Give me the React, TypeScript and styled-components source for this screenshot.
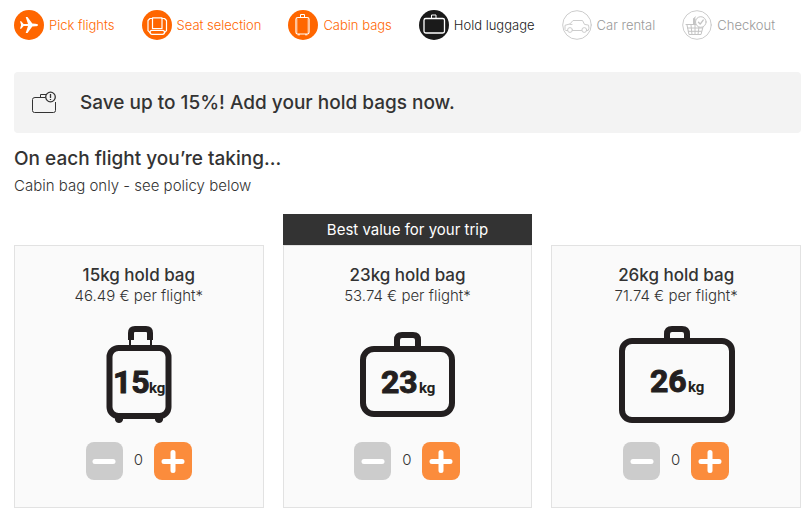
import React, { useState } from 'react';
import styled, { createGlobalStyle } from 'styled-components';

const GlobalStyle = createGlobalStyle`
  * { box-sizing: border-box; }
  body {
    margin: 0;
    background: #fff;
    color: #333;
    font-family: Inter, sans-serif;
    font-size: 15px;
  }
  h2, h3, p { margin: 0; }
`;

const Page = styled.div`
  padding: 10px 7px 9px 14px;
`;

const Steps = styled.nav`
  display: flex;
  gap: 27px;
  margin-bottom: 32px;
`;

type StepState = 'done' | 'current' | 'todo';
const stepColor = { done: '#ff6600', current: '#1a1a1a', todo: '#999' };

const Step = styled.a<{ $state: StepState }>`
  display: flex;
  align-items: center;
  gap: 5px;
  color: ${(p) => stepColor[p.$state]};
  font: 300 13px/30px Inter, sans-serif;
  white-space: nowrap;
  text-decoration: none;
`;

const StepIcon = styled.svg`
  flex: none;
  width: 30px;
  height: 30px;
  fill: none;
  stroke-linecap: round;
  stroke-linejoin: round;
`;

const Banner = styled.section`
  display: flex;
  align-items: center;
  gap: 23px;
  min-height: 61px;
  padding: 0 17px;
  margin-bottom: 12px;
  border-radius: 4px;
  background: #f3f3f3;
`;

const BannerIcon = styled.svg`
  width: 26px;
  height: 24px;
  fill: none;
  stroke: #333;
`;

const BannerText = styled.p`
  font: 500 19px/28px Inter, sans-serif;
`;

const Heading = styled.h2`
  font: 500 19px/28px Inter, sans-serif;
`;

const Note = styled.p`
  font: 300 15px/26px Inter, sans-serif;
`;

const Options = styled.div`
  display: grid;
  grid-template-columns: repeat(3, 1fr);
  gap: 19px;
  align-items: end;
  margin-top: 15px;
`;

const Option = styled.article`
  text-align: center;
`;

const Ribbon = styled.div`
  background: #333;
  color: #fff;
  font: 400 15px/31px Inter, sans-serif;
`;

const Card = styled.div`
  display: flex;
  flex-direction: column;
  align-items: center;
  padding: 18px 8px 27px;
  border: 1px solid #e2e2e2;
  background: #fafafa;
`;

const BagName = styled.h3`
  font: 500 17px/22px Inter, sans-serif;
`;

const Price = styled.p`
  font: 300 15px/20px Inter, sans-serif;
`;

const BagDrawing = styled.svg`
  width: 120px;
  height: 120px;
  margin-top: 9px;
  fill: none;
  stroke: #231f20;

  text {
    fill: #231f20;
    stroke-width: 1;
    stroke-linejoin: round;
    font: 700 32px Roboto, sans-serif;
  }
  text.unit {
    stroke-width: 0;
    font-size: 15px;
  }
`;

const Stepper = styled.div`
  display: flex;
  align-items: center;
  margin-top: 7px;
`;

const Count = styled.output`
  width: 31px;
  padding-bottom: 2px;
  font: 300 15px/34px Inter, sans-serif;
`;

const RoundButton = styled.button<{ $add?: boolean }>`
  display: grid;
  place-items: center;
  width: ${(p) => (p.$add ? 38 : 37)}px;
  height: 38px;
  padding: 0;
  border: 0;
  border-radius: 8px;
  background: ${(p) => (p.$add ? '#fb8c3c' : '#ccc')};
  cursor: pointer;

  svg {
    width: 24px;
    height: 24px;
    fill: none;
    stroke: #fff;
    stroke-width: 5;
    stroke-linecap: round;
  }
`;

const icons = {
  plane: (
    <path
      fill="#fff"
      stroke="none"
      d="M6 11.2h1.2l2.4 2.8 4.4-.1-2.300-6.900h1.800l4.800 6.500 3.200.2c1.700.1 2.600.6 2.600 1.300s-.9 1.200-2.600 1.300l-3.200.2-4.800 6.500h-1.800l2.300-6.900-4.400-.1-2.400 2.800H6l1.100-3.800z"
    />
  ),
  seat: (
    <g stroke="#fff" strokeWidth="1.2">
      <path d="M10.500 7.800h9.500v10.700h-9.500z" />
      <path d="M10.500 8.500H8L6 10.500v10.200l2 2M20 8.500h2.500l2 2v10.200l-2 2" />
      <rect x="8" y="20.300" width="14.500" height="4" rx="2" />
    </g>
  ),
  cabin: (
    <g stroke="#fff">
      <rect x="8" y="7.500" width="13" height="16.500" rx="1.800" strokeWidth="1.200" />
      <path d="M12.500 7V4.500h4V7M10 24.800h1.500M17.500 24.800H19" />
      <path opacity=".25" d="M9.500 9v13.500M19.500 9v13.500" />
    </g>
  ),
  hold: (
    <g stroke="#fff">
      <rect x="5" y="8.500" width="20.500" height="14.500" rx="1.800" strokeWidth="1.300" />
      <path d="M12.500 8V5h4.500v3" />
    </g>
  ),
  car: (
    <g stroke="#ccc">
      <path d="M5.500 20.500H3.700l-.7-1v-4.200l5-1.400 3-3.400h9.500l2 3.900 4 .7.500 3-.8 2.400h-1.500M10.500 20.500h9M8 14.400h2" />
      <circle cx="8" cy="20" r="2.400" />
      <circle cx="22.300" cy="20" r="2.400" />
    </g>
  ),
  basket: (
    <g stroke="#c4c4c4">
      <path d="M4 14.500h16.500M5 15l2 9.500h12l2-7.500M5.500 18h15M6.300 21.300h13.200M9 15l1 9.500M13 15v9.500M17 17l-1 7.500M11.500 14V8.500l2-1.500" />
      <path strokeWidth="2" d="M12.500 14V9" />
      <circle cx="18.800" cy="12" r="5.300" fill="#fff" />
      <path strokeWidth="1.400" d="M16.500 12.200l1.700 1.900 3-4" />
    </g>
  ),
};

const steps: { label: string; state: StepState; icon: keyof typeof icons }[] = [
  { label: 'Pick flights', state: 'done', icon: 'plane' },
  { label: 'Seat selection', state: 'done', icon: 'seat' },
  { label: 'Cabin bags', state: 'done', icon: 'cabin' },
  { label: 'Hold luggage', state: 'current', icon: 'hold' },
  { label: 'Car rental', state: 'todo', icon: 'car' },
  { label: 'Checkout', state: 'todo', icon: 'basket' },
];

interface Bag {
  kg: number;
  price: string;
  best?: boolean;
  shape: React.ReactNode;
  viewBox: string;
  numberX: number;
  unitX: number;
  baseline: number;
}

const bags: Bag[] = [
  {
    kg: 15,
    price: '46.49',
    viewBox: '-16 0 120 120',
    numberX: 18,
    unitX: 54,
    baseline: 78,
    shape: (
      <>
        <path strokeWidth="6" d="M36 25V18q0-4 4-4h11q4 0 4 4v7" />
        <path strokeWidth="2" d="M35 24v8M56 24v8" />
        <rect x="14.500" y="33" width="59" height="68" rx="9" strokeWidth="6" />
        <path fill="#231f20" stroke="none" d="M20 102h8v3q-1 3-4 3t-4-3zM60 102h8v3q-1 3-4 3t-4-3z" />
      </>
    ),
  },
  {
    kg: 23,
    price: '53.74',
    best: true,
    viewBox: '-3 0 120 120',
    numberX: 31,
    unitX: 69,
    baseline: 78,
    shape: (
      <>
        <path strokeWidth="6" d="M47 34v-9q0-5 5-5h11q5 0 5 5v9" />
        <rect x="13" y="34" width="89" height="65" rx="11" strokeWidth="6" />
      </>
    ),
  },
  {
    kg: 26,
    price: '71.74',
    viewBox: '-3 0 120 120',
    numberX: 31,
    unitX: 69,
    baseline: 77,
    shape: (
      <>
        <path strokeWidth="6" d="M48 26v-7q0-5 5-5h10q5 0 5 5v7" />
        <rect x="3" y="26" width="110" height="79" rx="10" strokeWidth="6" />
      </>
    ),
  },
];

function BagOption({ bag }: { bag: Bag }) {
  const [count, setCount] = useState(0);
  return (
    <Option>
      {bag.best && <Ribbon>Best value for your trip</Ribbon>}
      <Card>
        <BagName>{bag.kg}kg hold bag</BagName>
        <Price>{bag.price} € per flight*</Price>
        <BagDrawing viewBox={bag.viewBox} role="img" aria-label={`${bag.kg}kg bag`}>
          {bag.shape}
          <text x={bag.numberX} y={bag.baseline}>{bag.kg}</text>
          <text className="unit" x={bag.unitX} y={bag.baseline}>kg</text>
        </BagDrawing>
        <Stepper>
          <RoundButton
            aria-label={`Remove ${bag.kg}kg bag`}
            onClick={() => setCount(Math.max(0, count - 1))}
          >
            <svg viewBox="0 0 24 24" aria-hidden="true"><path d="M3 12.500h18" /></svg>
          </RoundButton>
          <Count>{count}</Count>
          <RoundButton $add aria-label={`Add ${bag.kg}kg bag`} onClick={() => setCount(count + 1)}>
            <svg viewBox="0 0 24 24" aria-hidden="true"><path d="M3 12.500h18M12 3.500v18" /></svg>
          </RoundButton>
        </Stepper>
      </Card>
    </Option>
  );
}

export default function App() {
  return (
    <>
      <GlobalStyle />
      <Page>
        <Steps aria-label="Booking steps">
          {steps.map((s) => (
            <Step
              key={s.label}
              href="#"
              $state={s.state}
              aria-current={s.state === 'current' ? 'step' : undefined}
            >
              <StepIcon viewBox="0 0 30 30" aria-hidden="true">
                {s.state === 'todo' ? (
                  <circle cx="15" cy="15" r="14.300" stroke="#ccc" />
                ) : (
                  <circle cx="15" cy="15" r="15" fill={stepColor[s.state]} />
                )}
                {icons[s.icon]}
              </StepIcon>
              {s.label}
            </Step>
          ))}
        </Steps>
        <Banner>
          <BannerIcon viewBox="0 0 26 24" aria-hidden="true">
            <path d="M14.500 6.500H4q-2.500 0-2.500 2V19.500q0 2 2 2h19q2 0 2-2V11" />
            <path d="M9.500 6V3.500H15" />
            <circle cx="19.500" cy="6" r="4.800" strokeWidth="1.300" />
            <path d="M19.500 3v4M19.500 8v1" strokeWidth="1.300" />
          </BannerIcon>
          <BannerText>Save up to 15%! Add your hold bags now.</BannerText>
        </Banner>
        <Heading>On each flight you’re taking...</Heading>
        <Note>Cabin bag only - see policy below</Note>
        <Options>
          {bags.map((b) => (
            <BagOption key={b.kg} bag={b} />
          ))}
        </Options>
      </Page>
    </>
  );
}
